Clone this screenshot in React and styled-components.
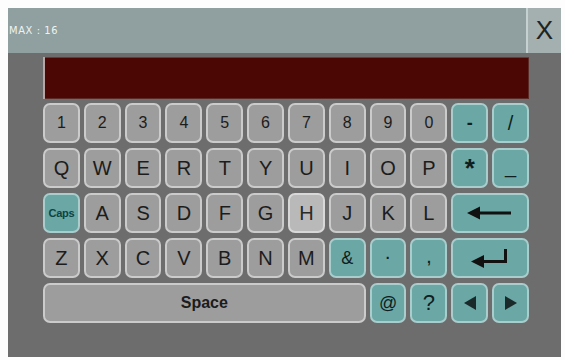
import React from 'react';
import styled, { createGlobalStyle } from 'styled-components';

const GlobalStyle = createGlobalStyle`
  html, body {
    margin: 0;
    padding: 0;
    background: #fdfdfd;
  }
  body {
    font-family: "Liberation Sans", Arial, sans-serif;
  }
`;

const Frame = styled.div`
  margin: 8px 0 0 8px;
  width: 553px;
  height: 349px;
  display: flex;
  flex-direction: column;
  background: #6d6d6d;
`;

const Header = styled.div`
  height: 45px;
  display: flex;
  flex-shrink: 0;
`;

const Title = styled.div`
  flex: 1;
  background: #909f9f;
  display: flex;
  align-items: center;
  padding-left: 1px;
  color: #eef3f2;
  font-family: "DejaVu Sans Condensed", "DejaVu Sans", sans-serif;
  font-size: 11px;
  letter-spacing: 0.6px;
`;

const CloseButton = styled.button`
  width: 35px;
  border: none;
  border-left: 2px solid #c5d0d0;
  background: #a4afaf;
  color: #1e2424;
  font-family: "Liberation Sans", Arial, sans-serif;
  font-size: 26px;
  padding: 0;
  display: flex;
  align-items: center;
  justify-content: center;
`;

const Body = styled.div`
  padding: 4px 0 0 35px;
  width: 486px;
`;

const Display = styled.div`
  height: 42px;
  background: #4a0703;
  border-left: 2px solid #b9a6a4;
  box-shadow: inset 0 1px 0 #6a3a36, inset -1px -1px 0 #5a2a26;
  margin-bottom: 4px;
`;

const Keys = styled.div`
  display: grid;
  grid-template-columns: repeat(12, 1fr);
  grid-auto-rows: 40px;
  column-gap: 4px;
  row-gap: 5px;
`;

const palette = {
  gray: { bg: '#9d9d9d', border: '#cbcbcb', color: '#1c1c1c' },
  light: { bg: '#b9b9b9', border: '#d8d8d8', color: '#2a2a2a' },
  teal: { bg: '#6aa7a5', border: '#a9cdcc', color: '#0f1e1e' },
};

const Key = styled.div`
  grid-column: span ${(p) => p.$span || 1};
  border-radius: 7px;
  border: 2px solid ${(p) => palette[p.$tone || 'gray'].border};
  background: ${(p) => palette[p.$tone || 'gray'].bg};
  color: ${(p) => palette[p.$tone || 'gray'].color};
  display: flex;
  align-items: center;
  justify-content: center;
  font-size: ${(p) => p.$size || 20}px;
  font-weight: ${(p) => (p.$bold ? 700 : 400)};
  padding-bottom: ${(p) => p.$lift || 0}px;
  box-sizing: border-box;
`;

const CapsLabel = styled.span`
  font-size: 11px;
  font-weight: 700;
  color: #0c4444;
  letter-spacing: -0.3px;
`;

const BackArrow = () => (
  <svg width="46" height="14" viewBox="0 0 46 14">
    <rect x="10" y="5.5" width="34" height="3" fill="#111" />
    <path d="M0 7 L13 0.5 L13 13.5 Z" fill="#111" />
  </svg>
);

const EnterArrow = () => (
  <svg width="38" height="20" viewBox="0 0 38 20">
    <rect x="33" y="1" width="3" height="14" fill="#111" />
    <rect x="10" y="12" width="26" height="3" fill="#111" />
    <path d="M0 13.5 L13 7 L13 20 Z" fill="#111" />
  </svg>
);

const Tri = ({ dir }) => (
  <svg width="12" height="14" viewBox="0 0 12 14">
    <path d={dir === 'left' ? 'M0 7 L12 0 L12 14 Z' : 'M12 7 L0 0 L0 14 Z'} fill="#1a2a2a" />
  </svg>
);

const numbers = ['1', '2', '3', '4', '5', '6', '7', '8', '9', '0'];
const topRow = ['Q', 'W', 'E', 'R', 'T', 'Y', 'U', 'I', 'O', 'P'];
const midRow = ['A', 'S', 'D', 'F', 'G', 'H', 'J', 'K', 'L'];
const lowRow = ['Z', 'X', 'C', 'V', 'B', 'N', 'M'];

export default function App() {
  return (
    <>
      <GlobalStyle />
      <Frame>
        <Header>
          <Title>MAX : 16</Title>
          <CloseButton>X</CloseButton>
        </Header>
        <Body>
          <Display />
          <Keys>
            {numbers.map((n) => (
              <Key key={n} $size={16}>{n}</Key>
            ))}
            <Key $tone="teal" $size={18} $bold>-</Key>
            <Key $tone="teal" $size={20}>/</Key>

            {topRow.map((k) => (
              <Key key={k}>{k}</Key>
            ))}
            <Key $tone="teal" $size={26} $bold>*</Key>
            <Key $tone="teal" $size={20} $lift={4}>_</Key>

            <Key $tone="teal"><CapsLabel>Caps</CapsLabel></Key>
            {midRow.map((k) => (
              <Key key={k} $tone={k === 'H' ? 'light' : 'gray'}>{k}</Key>
            ))}
            <Key $tone="teal" $span={2}><BackArrow /></Key>

            {lowRow.map((k) => (
              <Key key={k}>{k}</Key>
            ))}
            <Key $tone="teal" $size={18}>&amp;</Key>
            <Key $tone="teal" $size={14} $bold>·</Key>
            <Key $tone="teal" $size={14} $bold>,</Key>
            <Key $tone="teal" $span={2}><EnterArrow /></Key>

            <Key $span={8} $size={16} $bold>Space</Key>
            <Key $tone="teal" $size={18}>@</Key>
            <Key $tone="teal" $size={22}>?</Key>
            <Key $tone="teal"><Tri dir="left" /></Key>
            <Key $tone="teal"><Tri dir="right" /></Key>
          </Keys>
        </Body>
      </Frame>
    </>
  );
}
